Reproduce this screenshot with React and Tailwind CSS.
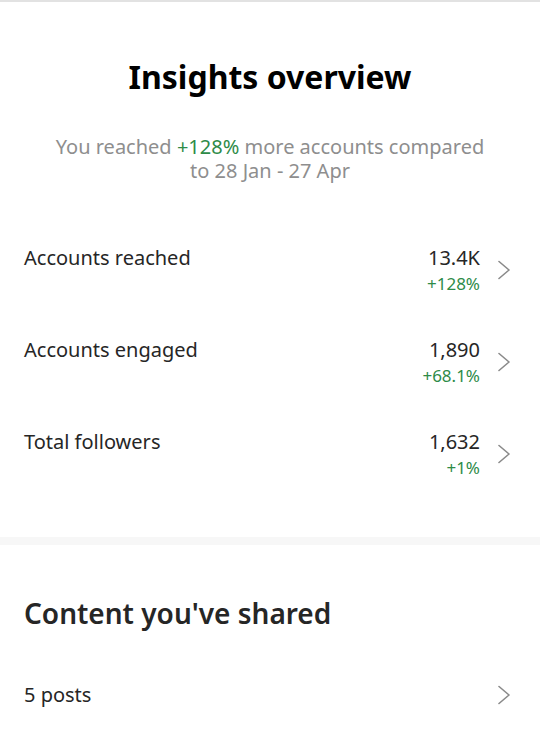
const font = { fontFamily: '"Noto Sans", "Open Sans", sans-serif' };

function Chevron() {
  return (
    <svg width="14" height="20" viewBox="0 0 14 20" fill="none" className="shrink-0">
      <path d="M2 1.5 L12 10 L2 18.5" stroke="#8a8a8a" strokeWidth="1.6" strokeLinecap="round" strokeLinejoin="round" />
    </svg>
  );
}

function MetricRow({ label, value, change }) {
  return (
    <div className="flex items-start justify-between">
      <div className="text-[20px] leading-[24px] text-[#262626]">{label}</div>
      <div className="flex items-center gap-[17px]">
        <div className="text-right">
          <div className="text-[20px] leading-[24px] text-[#262626]">{value}</div>
          <div className="mt-[4px] text-[17px] leading-[20px] text-[#2e8b48]">{change}</div>
        </div>
        <Chevron />
      </div>
    </div>
  );
}

const metrics = [
  { label: 'Accounts reached', value: '13.4K', change: '+128%' },
  { label: 'Accounts engaged', value: '1,890', change: '+68.1%' },
  { label: 'Total followers', value: '1,632', change: '+1%' },
];

export default function App() {
  return (
    <div className="min-h-[752px] w-[540px] bg-white" style={font}>
      <div className="h-[2px] bg-[#e2e2e2]" />
      <div className="px-[24px] pb-[59px]">
        <h1 className="pt-[55px] text-center text-[32px] font-bold leading-[40px] text-black">Insights overview</h1>
        <p className="mx-auto mt-[38px] max-w-[440px] text-center text-[20px] leading-[24px] text-[#8e8e8e]">
          You reached <span className="text-[#2e8b48]">+128%</span> more accounts compared to 28 Jan - 27 Apr
        </p>
        <div className="mt-[63px] flex flex-col gap-[44px] pr-[5px]">
          {metrics.map((m) => (
            <MetricRow key={m.label} {...m} />
          ))}
        </div>
      </div>
      <div className="h-[8px] bg-[#f7f7f7]" />
      <div className="px-[24px] pt-[50px]">
        <h2 className="text-[28px] font-semibold leading-[36px] text-[#262626]">Content you've shared</h2>
        <div className="mt-[52px] flex items-center justify-between pr-[5px]">
          <div className="text-[20px] leading-[24px] text-[#262626]">5 posts</div>
          <Chevron />
        </div>
      </div>
    </div>
  );
}
